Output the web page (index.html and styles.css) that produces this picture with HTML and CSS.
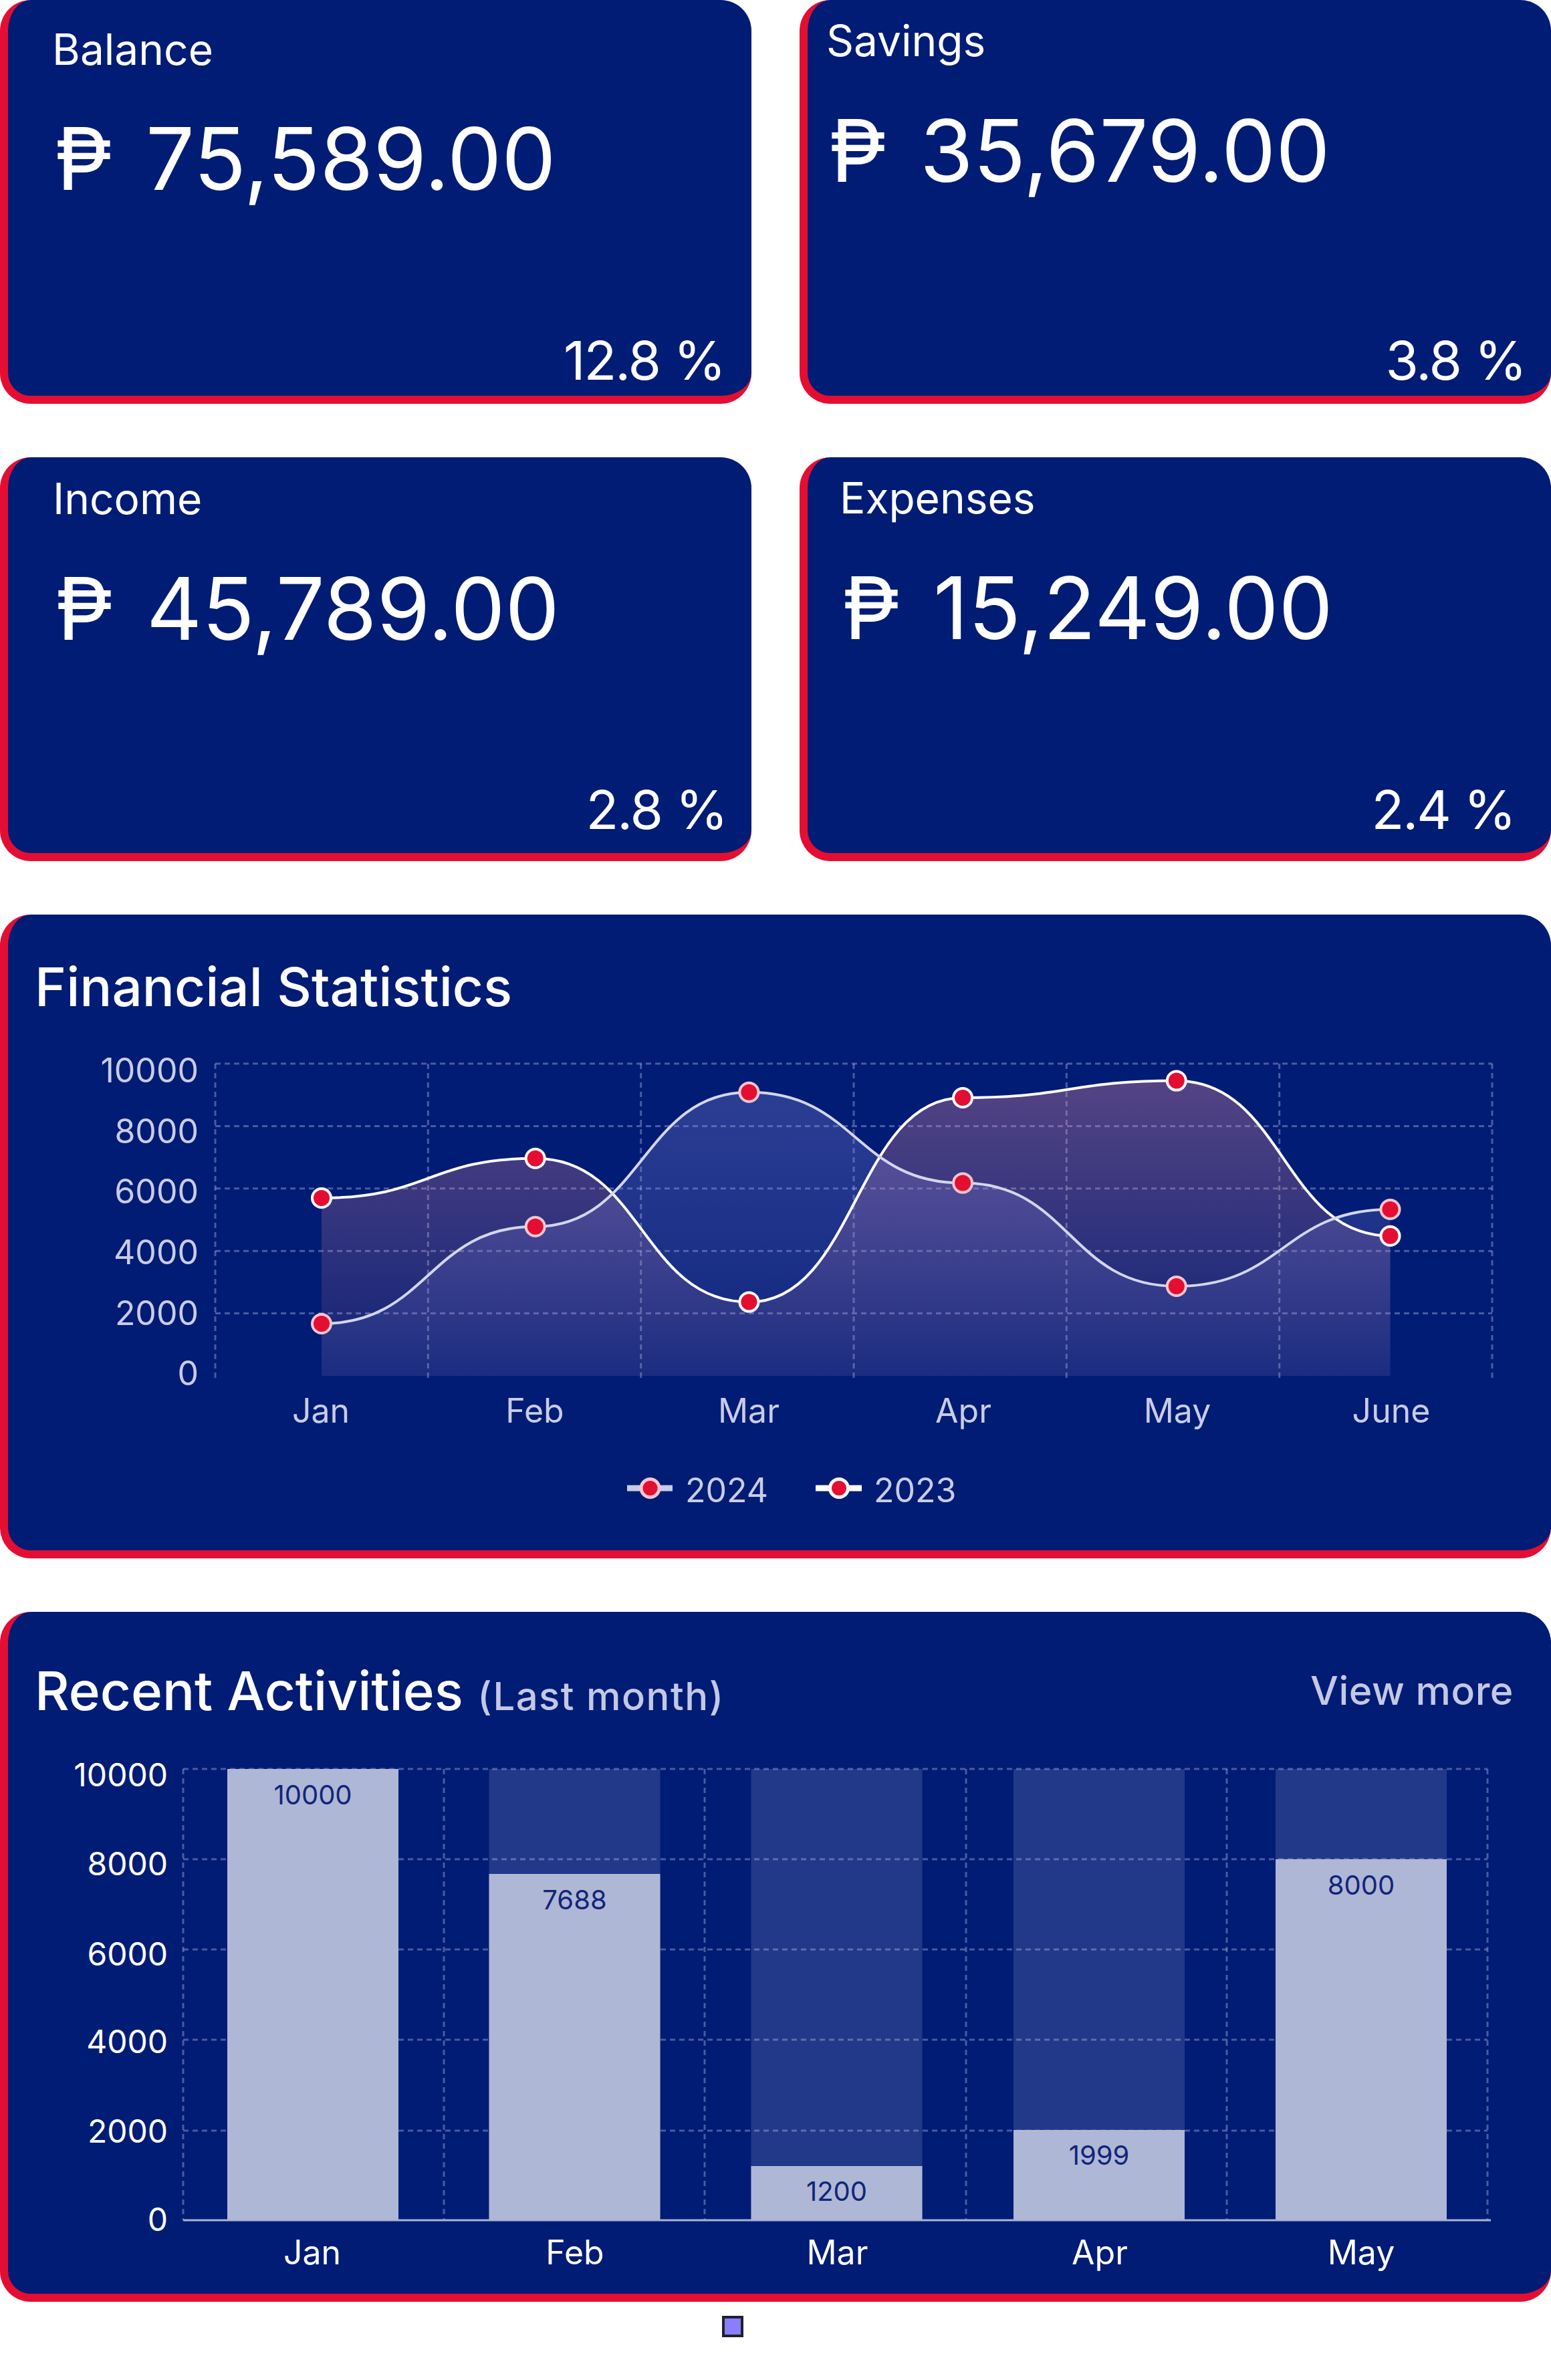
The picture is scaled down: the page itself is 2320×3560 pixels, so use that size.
FILE: index.html
```html
<!DOCTYPE html>
<html lang="en">
<head>
<meta charset="utf-8">
<title>Dashboard</title>
<link rel="stylesheet" href="styles.css">
</head>
<body>
<main class="page">
  <section class="stats">
    <div class="stat stat--balance">
      <div class="stat__label">Balance</div>
      <div class="stat__amount"><span class="peso">₱</span> 75,589.00</div>
      <div class="stat__change">12.8 %</div>
    </div>
    <div class="stat stat--savings">
      <div class="stat__label">Savings</div>
      <div class="stat__amount"><span class="peso">₱</span> 35,679.00</div>
      <div class="stat__change">3.8 %</div>
    </div>
    <div class="stat stat--income">
      <div class="stat__label">Income</div>
      <div class="stat__amount"><span class="peso">₱</span> 45,789.00</div>
      <div class="stat__change">2.8 %</div>
    </div>
    <div class="stat stat--expenses">
      <div class="stat__label">Expenses</div>
      <div class="stat__amount"><span class="peso">₱</span> 15,249.00</div>
      <div class="stat__change">2.4 %</div>
    </div>
  </section>

  <section class="panel panel--stats">
    <h2 class="panel__title">Financial Statistics</h2>
    <svg class="chart chart--line" width="2308" height="795" viewBox="0 0 2308 795">
      <defs>
        <linearGradient id="g2023" x1="0" y1="0" x2="0" y2="1">
          <stop offset="0" stop-color="#e88aa0" stop-opacity="0.36"/>
          <stop offset="1" stop-color="#e88aa0" stop-opacity="0.06"/>
        </linearGradient>
        <linearGradient id="g2024" x1="0" y1="0" x2="0" y2="1">
          <stop offset="0" stop-color="#8884d8" stop-opacity="0.32"/>
          <stop offset="1" stop-color="#8884d8" stop-opacity="0.1"/>
        </linearGradient>
      </defs>
      <g class="grid">
        <line x1="310" y1="67" x2="2220" y2="67"/>
        <line x1="310" y1="160.4" x2="2220" y2="160.4"/>
        <line x1="310" y1="253.8" x2="2220" y2="253.8"/>
        <line x1="310" y1="347.2" x2="2220" y2="347.2"/>
        <line x1="310" y1="440.6" x2="2220" y2="440.6"/>
        <line x1="310" y1="67" x2="310" y2="538"/>
        <line x1="628.3" y1="67" x2="628.3" y2="538"/>
        <line x1="946.7" y1="67" x2="946.7" y2="538"/>
        <line x1="1265" y1="67" x2="1265" y2="538"/>
        <line x1="1583.3" y1="67" x2="1583.3" y2="538"/>
        <line x1="1901.7" y1="67" x2="1901.7" y2="538"/>
        <line x1="2220" y1="67" x2="2220" y2="538"/>
      </g>
      <path class="area" fill="url(#g2023)" d="M469,268 C628.85,268 628.85,208.7 788.7,208.7 C948.55,208.7 948.55,423.6 1108.4,423.6 C1268.25,423.6 1268.25,118 1428.1,118 C1587.95,118 1587.95,92.6 1747.8,92.6 C1907.65,92.6 1907.65,324.7 2067.5,324.7 L2067.5,534 L469,534 Z"/>
      <path class="area" fill="url(#g2024)" d="M469,456 C628.85,456 628.85,310.7 788.7,310.7 C948.55,310.7 948.55,109.8 1108.4,109.8 C1268.25,109.8 1268.25,245.6 1428.1,245.6 C1587.95,245.6 1587.95,400 1747.8,400 C1907.65,400 1907.65,285 2067.5,285 L2067.5,534 L469,534 Z"/>
      <path class="line line--2023" d="M469,268 C628.85,268 628.85,208.7 788.7,208.7 C948.55,208.7 948.55,423.6 1108.4,423.6 C1268.25,423.6 1268.25,118 1428.1,118 C1587.95,118 1587.95,92.6 1747.8,92.6 C1907.65,92.6 1907.65,324.7 2067.5,324.7"/>
      <path class="line line--2024" d="M469,456 C628.85,456 628.85,310.7 788.7,310.7 C948.55,310.7 948.55,109.8 1108.4,109.8 C1268.25,109.8 1268.25,245.6 1428.1,245.6 C1587.95,245.6 1587.95,400 1747.8,400 C1907.65,400 1907.65,285 2067.5,285"/>
      <g class="dots dots--2023">
        <circle cx="469" cy="268" r="14"/>
        <circle cx="788.7" cy="208.7" r="14"/>
        <circle cx="1108.4" cy="423.6" r="14"/>
        <circle cx="1428.1" cy="118" r="14"/>
        <circle cx="1747.8" cy="92.6" r="14"/>
        <circle cx="2067.5" cy="324.7" r="14"/>
      </g>
      <g class="dots dots--2024">
        <circle cx="469" cy="456" r="14"/>
        <circle cx="788.7" cy="310.7" r="14"/>
        <circle cx="1108.4" cy="109.8" r="14"/>
        <circle cx="1428.1" cy="245.6" r="14"/>
        <circle cx="1747.8" cy="400" r="14"/>
        <circle cx="2067.5" cy="285" r="14"/>
      </g>
      <g class="ticks ticks--y">
        <text x="285" y="95">10000</text>
        <text x="285" y="186">8000</text>
        <text x="285" y="276">6000</text>
        <text x="285" y="367">4000</text>
        <text x="285" y="458">2000</text>
        <text x="285" y="548">0</text>
      </g>
      <g class="ticks ticks--x">
        <text x="468" y="604">Jan</text>
        <text x="788" y="604">Feb</text>
        <text x="1108" y="604">Mar</text>
        <text x="1429" y="604">Apr</text>
        <text x="1749" y="604">May</text>
        <text x="2069" y="604">June</text>
      </g>
      <g class="legend">
        <line class="legend__line legend__line--2024" x1="926" y1="702" x2="994" y2="702"/>
        <circle class="legend__dot legend__dot--2024" cx="960.5" cy="702" r="13.5"/>
        <text x="1013" y="723">2024</text>
        <line class="legend__line legend__line--2023" x1="1208" y1="702" x2="1277" y2="702"/>
        <circle class="legend__dot legend__dot--2023" cx="1243" cy="702" r="13.5"/>
        <text x="1295" y="723">2023</text>
      </g>
    </svg>
  </section>

  <section class="panel panel--activity">
    <div class="panel__head">
      <h2 class="panel__title">Recent Activities <span class="panel__sub">(Last month)</span></h2>
      <a class="panel__link">View more</a>
    </div>
    <svg class="chart chart--bar" width="2308" height="854" viewBox="0 0 2308 854">
      <g class="bars-bg">
        <rect x="328" y="69" width="256" height="675"/>
        <rect x="719.5" y="69" width="256" height="675"/>
        <rect x="1111.5" y="69" width="256" height="675"/>
        <rect x="1504" y="69" width="256" height="675"/>
        <rect x="1896" y="69" width="256" height="675"/>
      </g>
      <g class="grid">
        <line x1="262" y1="69" x2="2213" y2="69"/>
        <line x1="262" y1="204" x2="2213" y2="204"/>
        <line x1="262" y1="339" x2="2213" y2="339"/>
        <line x1="262" y1="474" x2="2213" y2="474"/>
        <line x1="262" y1="610" x2="2213" y2="610"/>
        <line x1="262" y1="69" x2="262" y2="744"/>
        <line x1="652" y1="69" x2="652" y2="744"/>
        <line x1="1042" y1="69" x2="1042" y2="744"/>
        <line x1="1433" y1="69" x2="1433" y2="744"/>
        <line x1="1823" y1="69" x2="1823" y2="744"/>
        <line x1="2213" y1="69" x2="2213" y2="744"/>
      </g>
      <g class="bars">
        <rect x="328" y="69" width="256" height="675"/>
        <rect x="719.5" y="226" width="256" height="518"/>
        <rect x="1111.5" y="663" width="256" height="81"/>
        <rect x="1504" y="609" width="256" height="135"/>
        <rect x="1896" y="204" width="256" height="540"/>
      </g>
      <g class="bar-values">
        <text x="456" y="122">10000</text>
        <text x="847.5" y="279">7688</text>
        <text x="1239.5" y="715">1200</text>
        <text x="1632" y="661">1999</text>
        <text x="2024" y="257">8000</text>
      </g>
      <line class="axis" x1="262" y1="744" x2="2218" y2="744"/>
      <g class="ticks ticks--y ticks--light">
        <text x="239" y="95">10000</text>
        <text x="239" y="228">8000</text>
        <text x="239" y="363">6000</text>
        <text x="239" y="494">4000</text>
        <text x="239" y="628">2000</text>
        <text x="239" y="760">0</text>
      </g>
      <g class="ticks ticks--x ticks--light">
        <text x="455" y="810">Jan</text>
        <text x="848" y="810">Feb</text>
        <text x="1240.5" y="810">Mar</text>
        <text x="1633" y="810">Apr</text>
        <text x="2024" y="810">May</text>
      </g>
    </svg>
  </section>

  <div class="bar-legend"><span class="bar-legend__swatch"></span></div>
</main>
</body>
</html>
```

FILE: styles.css
```css
* { box-sizing: border-box; }

html, body {
  margin: 0;
  padding: 0;
  background: #ffffff;
}

body {
  font-family: "Inter", "Noto Sans", "DejaVu Sans", sans-serif;
  color: #ffffff;
}

.page {
  width: 2320px;
  display: flex;
  flex-direction: column;
  gap: 80px;
}

/* ---------- stat cards ---------- */
.stats {
  display: grid;
  grid-template-columns: 1124px 1124px;
  column-gap: 72px;
  row-gap: 80px;
}

.stat {
  height: 604px;
  background: #011c74;
  border-left: 12px solid #e40e32;
  border-bottom: 12px solid #e40e32;
  border-radius: 46px;
  display: flex;
  flex-direction: column;
  font-weight: 400;
}

.stat__label {
  font-size: 64px;
  line-height: 77.5px;
}

.stat__amount {
  font-size: 129px;
  line-height: 155px;
  white-space: nowrap;
}

.peso {
  display: inline-block;
  margin-left: 4px;
  margin-right: 14px;
}

.stat__change {
  margin-top: auto;
  align-self: flex-end;
  font-size: 80px;
  line-height: 97px;
  letter-spacing: -2px;
}

.stat--balance { padding: 35px 40px 5px 66px; }
.stat--balance .stat__amount { margin-top: 47px; }

.stat--savings { padding: 22px 38px 5px 28px; }
.stat--savings .stat__amount { margin-top: 48px; }

.stat--income { padding: 23px 37px 17px 67px; }
.stat--income .stat__amount { margin-top: 48px; }

.stat--expenses { padding: 22px 54px 17px 48px; }
.stat--expenses .stat__amount { margin-top: 48px; }

/* ---------- panels ---------- */
.panel {
  background: #011c74;
  border-left: 12px solid #e40e32;
  border-bottom: 12px solid #e40e32;
  border-radius: 46px;
  display: flex;
  flex-direction: column;
}

.panel--stats { padding-top: 59px; }
.panel--activity { padding-top: 69px; }

.panel__title {
  margin: 0;
  padding-left: 40px;
  font-size: 80px;
  line-height: 97px;
  font-weight: 500;
  white-space: nowrap;
}

.panel__head {
  height: 97px;
  display: flex;
  justify-content: space-between;
  align-items: center;
  padding-right: 56px;
}

.panel__sub {
  font-size: 58px;
  line-height: 1;
  font-weight: 500;
  letter-spacing: 1.5px;
  color: #c3c8e5;
}

.panel__link {
  font-size: 59px;
  line-height: 1;
  font-weight: 500;
  letter-spacing: 0.5px;
  color: #c3c8e5;
}

.chart {
  display: block;
  font-family: "Inter", "Noto Sans", sans-serif;
}

.grid line {
  stroke: rgba(190, 198, 240, 0.38);
  stroke-width: 3;
  stroke-dasharray: 8 6;
}

.area { stroke: none; }

.line {
  fill: none;
  stroke-width: 4;
}
.line--2023 { stroke: #ffffff; }
.line--2024 { stroke: #d2d6ee; }

.dots circle {
  fill: #e40e32;
  stroke-width: 4;
}
.dots--2023 circle { stroke: #ffffff; }
.dots--2024 circle { stroke: #f6c7cf; }

.ticks text {
  font-size: 50px;
  fill: #c8cce6;
}
.ticks--y text { text-anchor: end; }
.ticks--x text { text-anchor: middle; }
.ticks--light text { fill: #ffffff; }
.ticks--y.ticks--light text { font-size: 48px; }

.legend text {
  font-size: 50px;
  fill: #c8cce6;
}
.legend__line { stroke-width: 9; }
.legend__line--2024 { stroke: #c8cce6; }
.legend__line--2023 { stroke: #ffffff; }
.legend__dot { fill: #e40e32; stroke-width: 5; }
.legend__dot--2024 { stroke: #f6c7cf; }
.legend__dot--2023 { stroke: #ffffff; }

.bars-bg rect { fill: #22398a; }
.bars rect { fill: #aeb7d5; }

.bar-values text {
  font-size: 40px;
  fill: #13247a;
  text-anchor: middle;
}

.axis {
  stroke: #aab3d6;
  stroke-width: 3;
}

/* ---------- bottom legend ---------- */
.bar-legend {
  display: flex;
  justify-content: center;
  padding-right: 128px;
  margin-top: -59px;
}

.bar-legend__swatch {
  width: 32px;
  height: 32px;
  background: #8a7eff;
  border: 4px solid #1e2130;
}
```
